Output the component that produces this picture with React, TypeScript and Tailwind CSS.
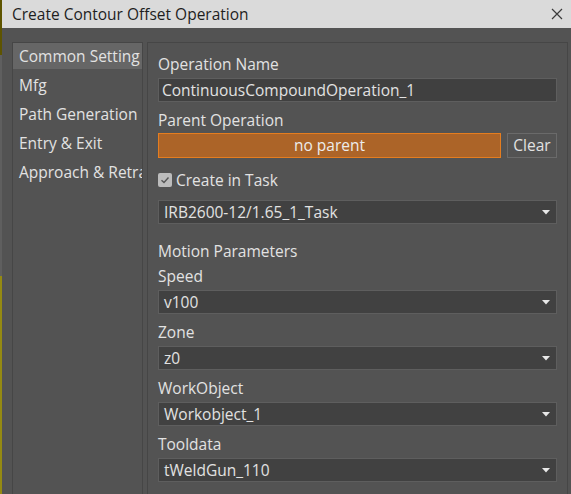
import { useState } from 'react'

type SelectProps = {
  value: string
}

const navItems = ['Common Setting', 'Mfg', 'Path Generation', 'Entry & Exit', 'Approach & Retract']

const motionFields = [
  { label: 'Speed', value: 'v100' },
  { label: 'Zone', value: 'z0' },
  { label: 'WorkObject', value: 'Workobject_1' },
  { label: 'Tooldata', value: 'tWeldGun_110' },
]

// combo box with the small white caret on the right
const Select = ({ value }: SelectProps) => {
  return (
    <div className="h-[24px] flex items-center justify-between border border-[#5e5e5e] bg-[#414141] pl-[5px] pr-[5px]">
      <span className="text-[15.5px] leading-[20px] text-[#e2e2e2] whitespace-nowrap">{value}</span>
      <svg width="8" height="5" viewBox="0 0 8 5" className="mr-[1px]">
        <path d="M0 0 H8 L4 4.5 Z" fill="#e8e8e8" />
      </svg>
    </div>
  )
}

const Label = ({ text, className = '' }: { text: string; className?: string }) => (
  <div className={`text-[15.5px] leading-[20px] text-[#e2e2e2] ${className}`}>{text}</div>
)

export default function App() {
  const [active, setActive] = useState(0)
  const [inTask, setInTask] = useState(true)

  return (
    <div
      className="w-[571px] h-[494px] overflow-hidden flex bg-[#535353]"
      style={{ fontFamily: '"Open Sans", "Noto Sans", sans-serif' }}
    >
      {/* strip of the window behind */}
      <div className="w-[2px] flex flex-col shrink-0">
        <div className="h-[55px] bg-[#5e5400]" />
        <div className="h-[221px] bg-[#5f5f5f]" />
        <div className="flex-1 bg-[#958a12]" />
      </div>

      <div className="flex-1 flex flex-col min-w-0">
        {/* title bar */}
        <div className="h-[28px] shrink-0 bg-[#dadada] flex items-center justify-between pl-[10px] pr-[8px]">
          <span className="text-[15.5px] text-[#1e1e1e] leading-[20px]">Create Contour Offset Operation</span>
          <svg width="12" height="12" viewBox="0 0 12 12">
            <path d="M1 1 L11 11 M11 1 L1 11" stroke="#3a3a3a" strokeWidth="1.2" />
          </svg>
        </div>

        <div className="flex-1 flex gap-[4px] pt-[14px] pl-[10px] pr-[3px]">
          {/* page list */}
          <div className="w-[131px] h-[520px] shrink-0 border border-[#464646] overflow-hidden">
            <div className="flex flex-col gap-[3px]">
              {navItems.map((item, i) => (
                <div
                  key={item}
                  onClick={() => setActive(i)}
                  className={`h-[26px] pl-[6px] text-[15.5px] leading-[26px] text-[#e2e2e2] whitespace-nowrap cursor-default ${
                    i === active ? 'bg-[#666666]' : ''
                  }`}
                >
                  {item}
                </div>
              ))}
            </div>
          </div>

          {/* settings page */}
          <div className="flex-1 h-[520px] border border-[#464646] pt-[11px] pl-[10px] pr-[10px]">
            <Label text="Operation Name" />
            <input
              defaultValue="ContinuousCompoundOperation_1"
              className="mt-[4px] w-full h-[24px] border border-[#5e5e5e] bg-[#404040] px-[3px] text-[15.5px] text-[#e2e2e2] outline-none"
            />

            <Label text="Parent Operation" className="mt-[8px]" />
            <div className="mt-[3px] flex gap-[6px] h-[25px]">
              <div className="flex-1 border border-[#e57d1f] bg-[#ac6428] flex items-center justify-center text-[15.5px] text-[#ececec]">
                no parent
              </div>
              <button className="w-[50px] border border-[#6a6a6a] text-[15.5px] text-[#e2e2e2]">Clear</button>
            </div>

            <div className="mt-[12px] flex items-center gap-[4px] h-[20px]" onClick={() => setInTask(!inTask)}>
              <div className="w-[14px] h-[14px] rounded-[2px] bg-[#bcbcbc] flex items-center justify-center">
                {inTask && (
                  <svg width="10" height="10" viewBox="0 0 10 10">
                    <path d="M1.5 5.2 L4 7.5 L8.5 2.5" stroke="#555555" strokeWidth="1.4" fill="none" />
                  </svg>
                )}
              </div>
              <span className="text-[15.5px] leading-[20px] text-[#e2e2e2]">Create in Task</span>
            </div>

            <div className="mt-[10px]">
              <Select value="IRB2600-12/1.65_1_Task" />
            </div>

            <Label text="Motion Parameters" className="mt-[17px]" />
            {motionFields.map((f, i) => (
              <div key={f.label} className={i === 0 ? 'mt-[5px]' : 'mt-[8px]'}>
                <Label text={f.label} />
                <div className="mt-[4px]">
                  <Select value={f.value} />
                </div>
              </div>
            ))}
          </div>
        </div>
      </div>
    </div>
  )
}
